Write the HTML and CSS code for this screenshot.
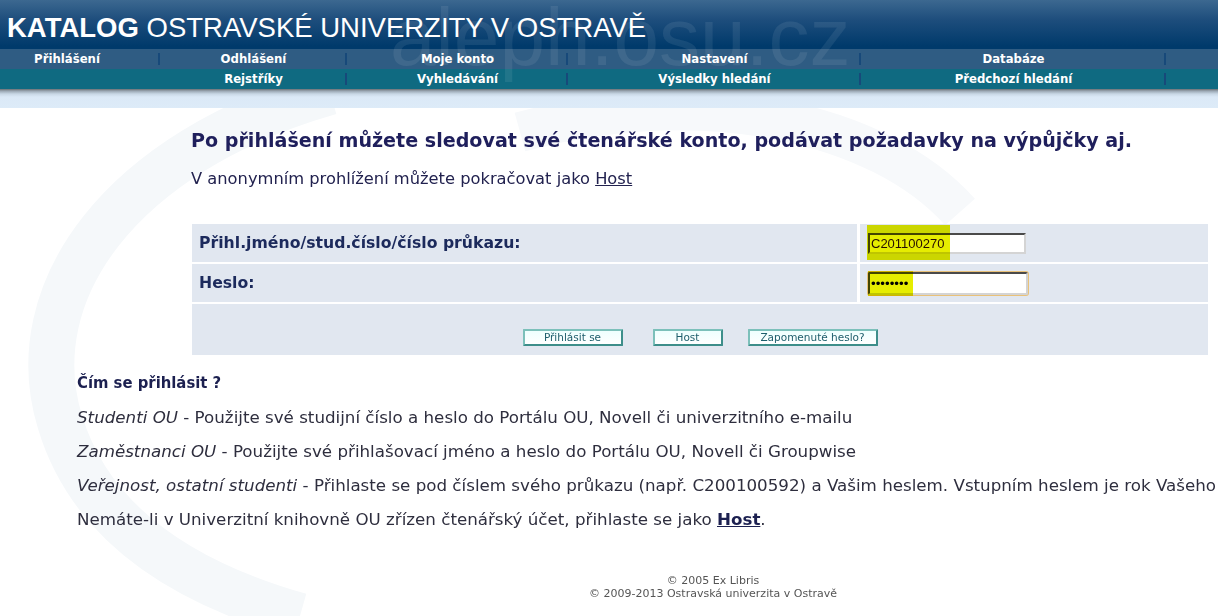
FILE: index.html
```html
<!DOCTYPE html>
<html lang="cs">
<head>
<meta charset="utf-8">
<title>Katalog Ostravské univerzity v Ostravě</title>
<link rel="stylesheet" href="styles.css">
</head>
<body>
<div class="page">
  <svg class="swirl" width="1218" height="524" viewBox="0 0 1218 524" aria-hidden="true">
    <path d="M330 0 C 120 60, 20 200, 60 330 C 90 430, 180 490, 300 524" fill="none" stroke="#f5f8fa" stroke-width="46"/>
    <path d="M520 40 C 700 -10, 880 30, 960 120" fill="none" stroke="#f7f9fb" stroke-width="40"/>
  </svg>
  <header class="top">
    <div class="swoosh" aria-hidden="true"></div>
    <div class="title"><b>KATALOG</b> OSTRAVSKÉ UNIVERZITY V OSTRAVĚ</div>
    <nav class="nav nav1">
      <a class="cell c1 sep" href="#">Přihlášení</a>
      <a class="cell c2 sep" href="#">Odhlášení</a>
      <a class="cell c3 sep" href="#">Moje konto</a>
      <a class="cell c4 sep" href="#">Nastavení</a>
      <a class="cell c5 sep" href="#">Databáze</a>
    </nav>
    <nav class="nav nav2">
      <span class="cell c1"></span>
      <a class="cell c2 sep" href="#">Rejstříky</a>
      <a class="cell c3 sep" href="#">Vyhledávání</a>
      <a class="cell c4 sep" href="#">Výsledky hledání</a>
      <a class="cell c5 sep" href="#">Předchozí hledání</a>
    </nav>
    <div class="watermark" data-mark="aleph.osu.cz" aria-hidden="true"></div>
  </header>
  <div class="band"></div>

  <main class="content">
    <section class="intro">
      <h1 class="headline">Po přihlášení můžete sledovat své čtenářské konto, podávat požadavky na výpůjčky aj.</h1>
      <p class="anon">V anonymním prohlížení můžete pokračovat jako <a href="#">Host</a></p>
    </section>

    <form class="login">
      <div class="lbl">Přihl.jméno/stud.číslo/číslo průkazu:</div>
      <div class="fld">
        <span class="inwrap">
          <input class="inp" type="text" value="C201100270">
          <span class="hl hl1"></span>
        </span>
      </div>
      <div class="lbl">Heslo:</div>
      <div class="fld">
        <span class="inwrap">
          <input class="inp focus" type="password" value="aaaaaaaa">
          <span class="hl hl2"></span>
        </span>
      </div>
      <div class="actions">
        <button type="button" class="btn b1">Přihlásit se</button>
        <button type="button" class="btn b2">Host</button>
        <button type="button" class="btn b3">Zapomenuté heslo?</button>
      </div>
    </form>

    <section class="help">
      <h2 class="helptitle">Čím se přihlásit ?</h2>
      <p><i>Studenti OU</i> - Použijte své studijní číslo a heslo do Portálu OU, Novell či univerzitního e-mailu</p>
      <p><i>Zaměstnanci OU</i> - Použijte své přihlašovací jméno a heslo do Portálu OU, Novell či Groupwise</p>
      <p class="long"><i>Veřejnost, ostatní studenti</i> - Přihlaste se pod číslem svého průkazu (např. C200100592) a Vašim heslem. Vstupním heslem je rok Vašeho</p>
      <p>Nemáte-li v Univerzitní knihovně OU zřízen čtenářský účet, přihlaste se jako <a href="#"><b>Host</b></a>.</p>
    </section>

    <footer class="foot">
      <div>© 2005 Ex Libris</div>
      <div>© 2009-2013 Ostravská univerzita v Ostravě</div>
    </footer>
  </main>
</div>
</body>
</html>
```

FILE: styles.css
```css
html, body {
  margin: 0;
  padding: 0;
  background: #ffffff;
  overflow: hidden;
}
body {
  font-family: "DejaVu Sans", Verdana, sans-serif;
  color: #333333;
}
.page {
  position: relative;
  width: 1218px;
  height: 616px;
  overflow: hidden;
}
.swirl {
  position: absolute;
  left: 0;
  top: 92px;
  z-index: 0;
}
.top {
  position: relative;
  height: 89px;
  background: linear-gradient(#3c6890 0px, #1d4d7c 20px, #003a6b 46px, #003a6b 49px);
  overflow: hidden;
  z-index: 1;
}
.swoosh {
  position: absolute;
  left: -140px;
  top: -40px;
  width: 260px;
  height: 260px;
  border-radius: 50%;
  border: 18px solid transparent;
  border-left-color: rgba(255,255,255,0.07);
  transform: rotate(20deg);
  z-index: 4;
}
.watermark {
  position: absolute;
  left: 390px;
  top: -4px;
  height: 93px;
  z-index: 4;
  pointer-events: none;
}
.watermark::before {
  content: attr(data-mark);
  display: block;
  font-family: "Liberation Sans", Arial, sans-serif;
  font-size: 82px;
  line-height: 82px;
  color: rgba(255,255,255,0.08);
  white-space: nowrap;
}
.title {
  position: relative;
  height: 49px;
  box-sizing: border-box;
  padding: 12px 0 0 7px;
  font-family: "Liberation Sans", Arial, sans-serif;
  font-size: 27.5px;
  line-height: 32px;
  color: #ffffff;
  white-space: nowrap;
}
.title b { font-weight: bold; }
.nav {
  position: relative;
  display: grid;
  grid-template-columns: 160px 187px 221px 293px 305px;
  height: 20px;
  z-index: 3;
}
.nav1 { background: #2f5c83; }
.nav2 { background: #0f6a81; }
.cell {
  display: block;
  text-align: center;
  font-family: "DejaVu Sans Condensed", Tahoma, sans-serif;
  font-weight: bold;
  font-size: 13px;
  line-height: 20px;
  color: #ffffff;
  text-decoration: none;
  white-space: nowrap;
}
.sep {
  background: linear-gradient(#17497a, #17497a) no-repeat right center / 2px 12px;
}
.nav .c1 { padding-right: 26px; }
.band {
  position: relative;
  height: 19px;
  background: linear-gradient(#6b6f73 0px, #9aa7b3 2px, #c9d8e6 5px, #dbe9f7 8px, #ddebf8 19px);
  z-index: 1;
}
.content {
  position: relative;
  z-index: 1;
}
.intro {
  padding-left: 191px;
  padding-top: 22px;
}
.headline {
  margin: 0;
  font-size: 19.1px;
  line-height: 22px;
  font-weight: bold;
  color: #1f1f5c;
  white-space: nowrap;
}
.anon {
  margin: 16px 0 0 0;
  font-size: 16.3px;
  line-height: 22px;
  color: #22224f;
}
.anon a { color: #22224f; }
.login {
  margin: 34px 0 0 192px;
  width: 1016px;
  display: grid;
  grid-template-columns: 665px 348px;
  column-gap: 3px;
  row-gap: 2px;
  grid-template-rows: 38px 38px 51px;
}
.lbl, .fld, .actions { background: #e1e7f0; }
.lbl {
  padding-left: 7px;
  font-size: 15.7px;
  font-weight: bold;
  line-height: 38px;
  color: #1c2a5c;
  white-space: nowrap;
}
.fld {
  display: flex;
  align-items: center;
  padding-left: 8px;
}
.inwrap {
  position: relative;
  display: block;
}
.inp {
  display: block;
  box-sizing: border-box;
  width: 158px;
  height: 21px;
  margin: 0;
  padding: 0 1px;
  border: 2px solid;
  border-color: #4a4a4a #d4d4d4 #d4d4d4 #4a4a4a;
  background: #ffffff;
  font-family: "Liberation Sans", Arial, sans-serif;
  font-size: 13px;
  color: #2b0f0f;
  outline: none;
}
.inp.focus {
  width: 160px;
  height: 23px;
  border-radius: 2px;
  box-shadow: 0 0 0 1px #e9c178;
  font-family: "Liberation Sans", Arial, sans-serif;
  font-size: 13.33px;
  color: #000;
}
.hl {
  position: absolute;
  background: #e6ed00;
  mix-blend-mode: multiply;
  pointer-events: none;
}
.hl1 { left: -1px; top: -8px; width: 83px; height: 35px; }
.hl2 { left: 0px; top: -1px; width: 45px; height: 25px; }
.actions {
  grid-column: 1 / 3;
  display: flex;
  justify-content: center;
  align-items: flex-start;
  padding-top: 25px;
}
.btn {
  box-sizing: border-box;
  height: 17px;
  margin: 0;
  padding: 0 6px;
  border: 2px solid;
  border-color: #7cc0ba #3d8e8a #3d8e8a #7cc0ba;
  border-radius: 1px;
  background: linear-gradient(#eefffe, #ffffff);
  font-family: "DejaVu Sans", Verdana, sans-serif;
  font-size: 10.5px;
  line-height: 13px;
  color: #1d5d6b;
  cursor: pointer;
}
.b1 { width: 100px; margin-right: 30px; }
.b2 { width: 70px; margin-right: 25px; }
.b3 { width: 130px; }
.help {
  padding-left: 77px;
  margin-top: 18px;
}
.helptitle {
  margin: 0;
  font-family: "DejaVu Sans Condensed", Tahoma, sans-serif;
  font-size: 16.5px;
  font-weight: bold;
  line-height: 20px;
  color: #1c2050;
}
.help p {
  margin: 14px 0 0 0;
  font-size: 16.7px;
  line-height: 20px;
  color: #2e2e3e;
  white-space: nowrap;
}
.help p a { color: #1c2050; }
.foot {
  width: 1426px;
  margin-top: 45px;
  text-align: center;
  font-size: 11px;
  line-height: 13px;
  color: #555555;
}
```
